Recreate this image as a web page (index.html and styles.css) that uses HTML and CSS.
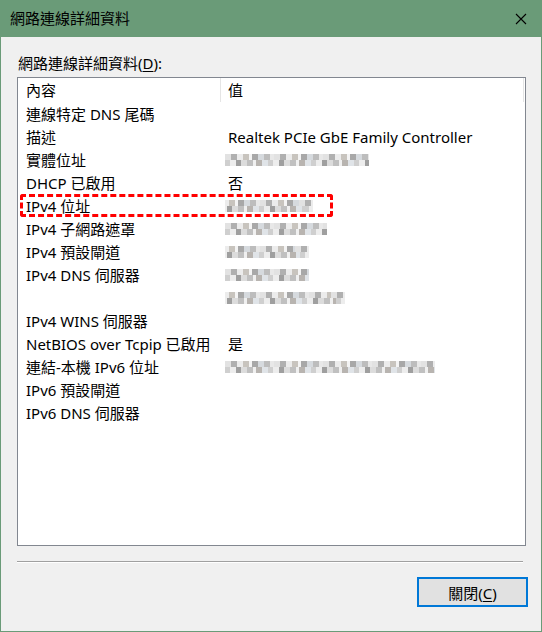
FILE: index.html
```html
<!DOCTYPE html>
<html lang="zh-Hant">
<head>
    <meta charset="UTF-8">
    <title>網路連線詳細資料</title>
    <link rel="stylesheet" href="styles.css">
</head>
<body>
    <div class="window">
        <div class="titlebar">
            <span class="title">網路連線詳細資料</span>
            <svg class="close" width="12" height="12" viewBox="0 0 12 12">
                <path d="M1 1 L11 11 M11 1 L1 11" stroke="#000" stroke-width="1.1" fill="none"/>
            </svg>
        </div>
        <div class="content">
            <div class="label">網路連線詳細資料(<u>D</u>):</div>
            <div class="listbox">
                <div class="row head">
                    <div class="name">內容</div>
                    <div class="value">值</div>
                </div>
                <div class="row"><div class="name">連線特定 DNS 尾碼</div><div class="value"></div></div>
                <div class="row"><div class="name">描述</div><div class="value">Realtek PCIe GbE Family Controller</div></div>
                <div class="row"><div class="name">實體位址</div><div class="value"><span class="blur w144"></span></div></div>
                <div class="row"><div class="name">DHCP 已啟用</div><div class="value">否</div></div>
                <div class="row marked">
                    <div class="name">IPv4 位址</div><div class="value"><span class="blur w88 alt"></span></div>
                    <div class="highlight"></div>
                </div>
                <div class="row"><div class="name">IPv4 子網路遮罩</div><div class="value"><span class="blur w102"></span></div></div>
                <div class="row"><div class="name">IPv4 預設閘道</div><div class="value"><span class="blur w84 alt"></span></div></div>
                <div class="row"><div class="name">IPv4 DNS 伺服器</div><div class="value"><span class="blur w84"></span></div></div>
                <div class="row"><div class="name"></div><div class="value"><span class="blur w120 alt"></span></div></div>
                <div class="row"><div class="name">IPv4 WINS 伺服器</div><div class="value"></div></div>
                <div class="row"><div class="name">NetBIOS over Tcpip 已啟用</div><div class="value">是</div></div>
                <div class="row"><div class="name">連結-本機 IPv6 位址</div><div class="value"><span class="blur w210"></span></div></div>
                <div class="row"><div class="name">IPv6 預設閘道</div><div class="value"></div></div>
                <div class="row"><div class="name">IPv6 DNS 伺服器</div><div class="value"></div></div>
            </div>
            <div class="separator"></div>
            <div class="buttons">
                <button type="button" class="btn">關閉(<u>C</u>)</button>
            </div>
        </div>
    </div>
</body>
</html>
```

FILE: styles.css
```css
body {
    margin: 0;
    padding: 0;
    font-family: "Noto Sans", "Noto Sans CJK TC", sans-serif;
    font-size: 15px;
    color: #000;
    background-color: #6a9b78;
}
.window {
    width: 540px;
    height: 631px;
    border: 1px solid #6a9b78;
    border-top: none;
    background-color: #f0f0f0;
    display: flex;
    flex-direction: column;
}
.titlebar {
    height: 37px;
    background-color: #6a9b78;
    display: flex;
    align-items: center;
    justify-content: space-between;
    padding: 0 14px 0 9px;
}
.title {
    font-size: 15px;
    padding-bottom: 2px;
}
.close {
    display: block;
}
.content {
    display: flex;
    flex-direction: column;
    padding: 0 15px 0 16px;
}
.label {
    height: 20px;
    line-height: 20px;
    margin-top: 16px;
    padding-left: 1px;
}
.label u, .btn u {
    text-decoration-thickness: 1px;
    text-underline-offset: 2px;
}
.listbox {
    margin-top: 4px;
    height: 467px;
    border: 1px solid #828790;
    background-color: #fff;
    display: flex;
    flex-direction: column;
}
.row {
    height: 23px;
    display: flex;
    align-items: center;
    position: relative;
    white-space: nowrap;
}
.row.head {
    height: 24px;
}
.name {
    width: 194px;
    padding-left: 8px;
    flex-shrink: 0;
}
.value {
    padding-left: 8px;
    display: flex;
    align-items: center;
}
.head .value {
    border-left: 1px solid #e5e5e5;
    height: 24px;
    width: 295px;
    padding-left: 7px;
    border-right: 1px solid #e5e5e5;
}
.head .name, .head .value {
    line-height: 24px;
}
.highlight {
    position: absolute;
    left: 2px;
    top: 0;
    width: 307px;
    height: 17px;
    border: 3px dashed #ff0000;
    border-radius: 3px;
}
/* pixelated (blurred) address values */
.blur {
    display: inline-block;
    height: 12px;
    margin-left: -3px;
    background-image:
        repeating-linear-gradient(90deg, #e2e2e2 0 6px, #b0b0b0 6px 12px, #ececec 12px 18px, #c8c4be 18px 24px, #f4f4f4 24px 27px, #a8a8a8 27px 33px, #d6dade 33px 39px, #bdbdbd 39px 45px, #e8e8e8 45px 49px),
        repeating-linear-gradient(90deg, #cfcfcf 0 5px, #ededed 5px 11px, #9f9f9f 11px 16px, #dcdcdc 16px 22px, #c0c0c0 22px 28px, #f0f0f0 28px 31px, #b8b4b0 31px 37px, #e0e4e8 37px 43px);
    background-size: 100% 6px, 100% 6px;
    background-position: 0 0, 0 6px;
    background-repeat: repeat-x;
}
.blur.alt {
    background-position: -14px 0, -9px 6px;
}
.w88 { width: 88px; }
.w84 { width: 84px; }
.w102 { width: 102px; }
.w120 { width: 120px; }
.w144 { width: 144px; }
.w210 { width: 210px; }
.separator {
    margin-top: 15px;
    width: 506px;
    height: 1px;
    background-color: #a0a0a0;
    border-bottom: 1px solid #fff;
}
.buttons {
    display: flex;
    justify-content: flex-end;
    margin-top: 14px;
    margin-right: -2px;
}
.btn {
    width: 111px;
    height: 30px;
    border: 2px solid #0078d7;
    background-color: #e1e1e1;
    font-family: "Noto Sans", "Noto Sans CJK TC", sans-serif;
    font-size: 15px;
    color: #000;
    padding: 0;
}
```
